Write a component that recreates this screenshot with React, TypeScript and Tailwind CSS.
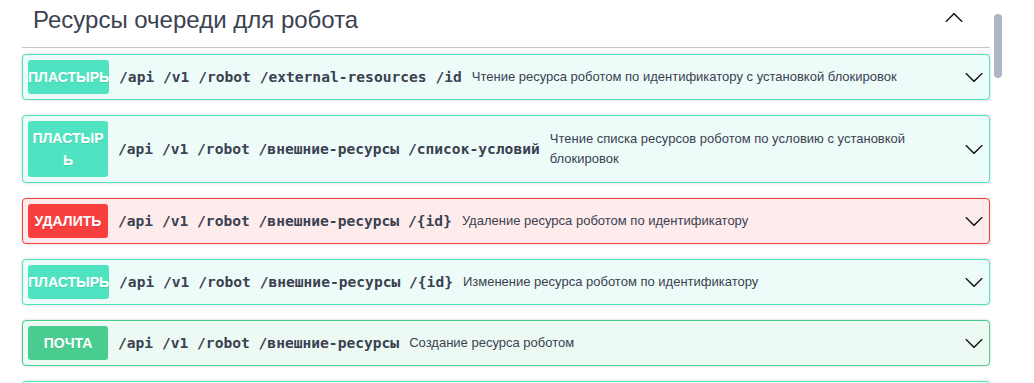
const Arrow = ({ up = false }: { up?: boolean }) => (
  <svg
    width="20"
    height="20"
    viewBox="0 0 20 20"
    className={up ? "rotate-180 shrink-0" : "shrink-0"}
    fill="#1b1b1b"
  >
    <path d="M17.418 6.109c.272-.268.709-.268.979 0s.271.701 0 .969l-7.908 7.83c-.27.268-.707.268-.979 0l-7.908-7.83c-.27-.268-.27-.701 0-.969.271-.268.709-.268.979 0L10 13.25l7.418-7.141z" />
  </svg>
);

type Op = {
  method: "patch" | "delete" | "post";
  label: React.ReactNode;
  path: React.ReactNode;
  desc: string;
};

const styles = {
  patch: { box: "border-[#50e3c2] bg-[#eefcf9]", badge: "bg-[#50e3c2]" },
  delete: { box: "border-[#f93e3e] bg-[#feecec]", badge: "bg-[#f93e3e]" },
  post: { box: "border-[#49cc90] bg-[#edfaf4]", badge: "bg-[#49cc90]" },
};

const ops: Op[] = [
  {
    method: "patch",
    label: "ПЛАСТЫРЬ",
    path: "/api /v1 /robot /external-resources /id",
    desc: "Чтение ресурса роботом по идентификатору с установкой блокировок",
  },
  {
    method: "patch",
    label: (
      <>
        ПЛАСТЫР
        <br />Ь
      </>
    ),
    path: "/api /v1 /robot /внешние-ресурсы /список-условий",
    desc: "Чтение списка ресурсов роботом по условию с установкой блокировок",
  },
  {
    method: "delete",
    label: "УДАЛИТЬ",
    path: "/api /v1 /robot /внешние-ресурсы /{id}",
    desc: "Удаление ресурса роботом по идентификатору",
  },
  {
    method: "patch",
    label: "ПЛАСТЫРЬ",
    path: "/api /v1 /robot /внешние-ресурсы /{id}",
    desc: "Изменение ресурса роботом по идентификатору",
  },
  {
    method: "post",
    label: "ПОЧТА",
    path: "/api /v1 /robot /внешние-ресурсы",
    desc: "Создание ресурса роботом",
  },
  {
    method: "patch",
    label: "ПЛАСТЫРЬ",
    path: "/api /v1 /robot /внешние-ресурсы /заблокировать",
    desc: "Блокировка ресурса роботом",
  },
];

const OpBlock = ({ op }: { op: Op }) => {
  const s = styles[op.method];
  return (
    <div
      className={`mb-[15px] rounded-[4px] border shadow-[0_0_3px_rgba(0,0,0,0.19)] ${s.box}`}
    >
      <div className="flex items-center p-[5px]">
        <span
          className={`min-w-[80px] shrink-0 rounded-[3px] py-[6px] text-center text-[14px] font-bold leading-[22px] text-white whitespace-nowrap [text-shadow:0_1px_0_rgba(0,0,0,0.1)] ${s.badge}`}
        >
          {op.label}
        </span>
        <span className="shrink-0 px-[10px] font-['DejaVu_Sans_Mono',monospace] text-[14.6px] font-bold text-[#3b4151]">
          {op.path}
        </span>
        <span className="min-w-0 flex-1 text-[13px] leading-[20px] text-[#3b4151]">
          {op.desc}
        </span>
        <Arrow />
      </div>
    </div>
  );
};

export default function App() {
  return (
    <div className="flex h-[383px] overflow-hidden bg-white font-['Liberation_Sans',Arial,sans-serif]">
      <div className="ml-[22px] w-[968px] shrink-0">
        <div className="mb-[6px] flex h-[48px] items-start justify-between border-b border-[#c4c6cb]">
          <h3 className="pl-[11px] pt-[5px] text-[24px] leading-[30px] text-[#3b4151]">
            Ресурсы очереди для робота
          </h3>
          <div className="mr-[26px] mt-[8px]">
            <Arrow up />
          </div>
        </div>
        {ops.map((op, i) => (
          <OpBlock key={i} op={op} />
        ))}
      </div>
      <div className="ml-[4px] pt-[14px]">
        <div className="h-[64px] w-[8px] rounded-full bg-[#afb6c3]" />
      </div>
    </div>
  );
}
